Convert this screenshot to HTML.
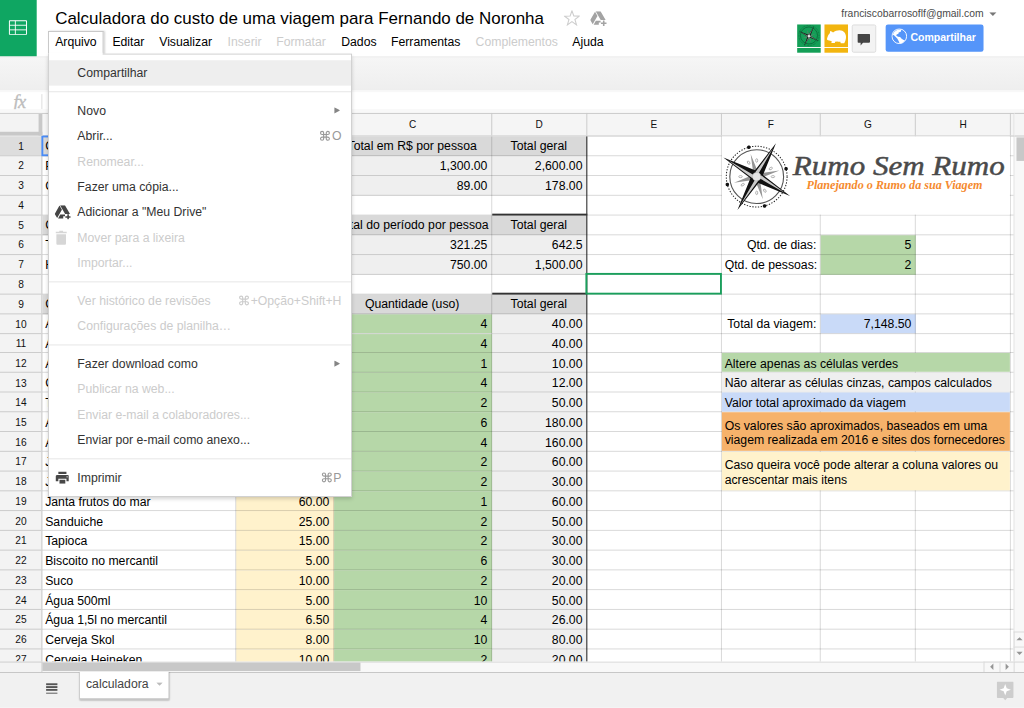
<!DOCTYPE html>
<html><head><meta charset="utf-8"><title>Calculadora</title><style>
*{box-sizing:border-box;margin:0;padding:0}
html,body{width:1024px;height:708px;overflow:hidden;background:#fff}
body{font-family:"Liberation Sans", sans-serif;font-size:13px;color:#000;position:relative}
#app{position:absolute;left:0;top:0;width:1088px;height:752px;transform:scale(0.9411765);transform-origin:0 0;overflow:hidden;background:#fff}
.a{position:absolute}
.t{position:absolute;white-space:nowrap;line-height:21px;height:21px;font-size:13px;color:#000}
.r{text-align:right}
.c{text-align:center}
.hl{position:absolute;height:1px;background:rgba(0,0,0,0.16)}
.vl{position:absolute;width:1px;background:rgba(0,0,0,0.16)}
.mi{position:absolute;left:0;width:100%;height:27px;line-height:27px;font-size:13px;color:#333;padding-left:30px;white-space:nowrap}
.mi.d{color:#ccc}

.mi .k{position:absolute;right:10.1px;top:0;color:#999}
.mi.d .k{color:#ccc}
.sep{position:absolute;left:0;width:100%;height:1px;background:#e5e5e5}
.mb{position:absolute;top:32.94px;height:24.97px;line-height:24.97px;font-size:13px;color:#000;white-space:nowrap;padding-top:0.1px}
.mb.d{color:#ccc}
</style></head><body><div id="app">
<div class="a" style="left:0;top:0;width:39.31px;height:60.03px;background:#0fa662"></div>
<svg class="a" style="left:9.24px;top:20.72px" width="20.19" height="16.57" viewBox="0 0 19 15.600"><rect x="0.900" y="0.900" width="17.200" height="13.900" rx="0.500" fill="none" stroke="#fff" stroke-width="1.050"/><path d="M1 5.500H18M1 10.100H18M6.900 1V14.800" stroke="#fff" stroke-width="0.950" fill="none" opacity="0.950"/></svg>
<div class="a" style="left:58.65px;top:8.5px;font-size:18px;line-height:23.38px;white-space:nowrap;color:#000">Calculadora do custo de uma viagem para Fernando de Noronha</div>
<svg class="a" style="left:598.61px;top:11.05px" width="17.42" height="17.42" viewBox="0 0 16.4 16.4"><path d="M8.20 0.40 L10.03 5.68 L15.62 5.79 L11.17 9.16 L12.78 14.51 L8.20 11.32 L3.62 14.51 L5.23 9.16 L0.78 5.79 L6.37 5.68Z" fill="none" stroke="#cdcdcd" stroke-width="1.05" stroke-linejoin="miter"/></svg>
<svg class="a" style="left:627.3px;top:12.01px" width="17.42" height="15.66" viewBox="0 0 24.700 22.200"><path d="M8.300 0h7.400l7.700 13.300h-7.400z M7.400 0.600l3.700 6.400L3.900 19.600 0.200 13.200z M8.600 14.300h7.200v2.400h-2.700v3.400H5.300z M19.300 13.800h2.400v3h3v2.400h-3v3h-2.400v-3h-3v-2.400h3z" fill="#a3a3a3"/></svg>
<div class="mb" style="left:119.43px">Editar</div>
<div class="mb" style="left:169.15px">Visualizar</div>
<div class="mb d" style="left:241.72px">Inserir</div>
<div class="mb d" style="left:293.46px">Formatar</div>
<div class="mb" style="left:362.52px">Dados</div>
<div class="mb" style="left:415.44px">Ferramentas</div>
<div class="mb d" style="left:505.33px">Complementos</div>
<div class="mb" style="left:608.07px">Ajuda</div>
<div class="a" style="left:893.88px;top:6.91px;font-size:11px;line-height:14.88px;color:#4a4a4a;white-space:nowrap">franciscobarrosoflf@gmail.com</div>
<svg class="a" style="left:1051.45px;top:12.96px" width="7.86" height="4.04" viewBox="0 0 8 4"><path d="M0 0h8L4 4z" fill="#777"/></svg>
<div class="a" style="left:847.13px;top:25.61px;width:25.08px;height:24.33px;background:#149f57"></div>
<div class="a" style="left:847.13px;top:51.0px;width:25.08px;height:4.57px;background:#149f57"></div>
<div class="a" style="left:876.24px;top:25.61px;width:25.08px;height:24.33px;background:#f2b50f"></div>
<div class="a" style="left:876.24px;top:51.0px;width:25.08px;height:4.57px;background:#f2b50f"></div>
<svg class="a" style="left:847.13px;top:25.61px" width="25.08" height="24.33" viewBox="-12 -11.2 24 23.3"><circle r="8.7" fill="none" stroke="#0a5a32" stroke-width="0.7"/><circle r="10.3" fill="none" stroke="#0a5a32" stroke-width="0.6" stroke-dasharray="0.8 0.8"/><g transform="translate(0 0.7) rotate(27)"><path d="M0-7L0.800-0.800 7 0 0.800 0.800 0 7-0.800 0.800-7 0-0.800-0.800z" fill="#5d7f6d" transform="rotate(-45)"/><path d="M0-11.600L1.100-1.100 11.600 0 1.100 1.100 0 11.600-1.100 1.100-11.600 0-1.100-1.100z" fill="#151515"/><path d="M0-10L0 0-1-1zM10 0L0 0 1-1zM0 10L0 0 1 1zM-10 0L0 0-1 1z" fill="#7a8c82"/><circle r="1.300" fill="#e6e6e6"/></g></svg>
<svg class="a" style="left:876.24px;top:25.61px" width="25.08" height="24.33" viewBox="0 0 24 23.3"><path d="M2.500 14.900C3 12 4.500 9.500 5.600 8.600C5.400 7.400 5.800 6.600 6.600 6.800C7.400 7 8 7.600 8.700 8.200C10.500 6.800 13 6 15.300 6C19.500 6 22 9.500 21.900 12.500C21.900 14.500 21.500 16.500 20.700 17.900L20.100 19.200H16.500L16.200 17.600C15 17.800 14 17.700 13 17.400L10.800 17.600 10.500 18.800H7L7.400 17C6.200 16.900 5.300 16.700 4.600 16.400C3.500 16.200 2.400 15.800 2.500 14.900Z" fill="#fff"/></svg>
<div class="a" style="left:905.46px;top:25.92px;width:25.5px;height:29.64px;background:#f3f3f3;border:1px solid #dcdcdc;border-radius:2px"></div>
<svg class="a" style="left:911.2px;top:36.34px" width="13.39" height="12.75" viewBox="0 0 12.6 12"><path d="M1 0h10.6a1 1 0 0 1 1 1v6.8a1 1 0 0 1-1 1H5.6L3.2 11.6V8.8H1a1 1 0 0 1-1-1V1a1 1 0 0 1 1-1z" fill="#444"/></svg>
<div class="a" style="left:941.16px;top:25.82px;width:104.02px;height:29.01px;background:#5595f9;border-radius:2.5px"></div>
<svg class="a" style="left:946.69px;top:30.28px" width="17.0" height="17.0" viewBox="0 0 24 24"><circle cx="12" cy="12" r="11" fill="none" stroke="#fff" stroke-width="1.500" opacity="0.92"/><path d="M2.200 9.500A11 11 0 0 1 15.100 2L14.200 5.100 11.100 6.400 10.700 8.200 8 9.500 7.500 11.300 10.200 12.700 13.300 13.100 15.100 15.300 17.800 17.100 20.500 18.400A11 11 0 0 1 12.400 23L11.500 20.200 10.200 17.600 8.900 15.300 6.700 13.100 4.400 10.900Z" fill="#fff"/></svg>
<div class="a" style="left:967.3px;top:32.09px;font-size:11.2px;font-weight:bold;line-height:16.57px;color:#fff;white-space:nowrap">Compartilhar</div>
<div class="a" style="left:0;top:59.82px;width:1088px;height:36.87px;background:linear-gradient(#f6f6f6,#eeeeee);border-top:1px solid #e7e7e7;border-bottom:1px solid #d9d9d9"></div>
<div class="a" style="left:0;top:96.05px;width:1088px;height:24.23px;background:#fff"></div>
<div class="a" style="left:14.24px;top:98.18px;-webkit-text-stroke:0.35px #bdbdbd;font-family:'Liberation Serif',serif;font-style:italic;font-size:19.5px;line-height:22.31px;color:#bdbdbd;letter-spacing:-0.5px">fx</div>
<div class="a" style="left:43.88px;top:99.88px;width:1px;height:15.94px;background:#dcdcdc"></div>
<div class="a" style="left:0;top:115.71px;width:1088px;height:4.57px;background:#f8f8f8"></div>
<div class="a" style="left:0;top:96.26px;width:1088px;height:1.91px;background:#f8f8f8"></div>
<div id="grid" class="a" style="left:0;top:0;width:1088px;height:702.63px;overflow:hidden">
<div class="a" style="left:0;top:119.74px;width:1088px;height:24.89px;background:#f5f5f5;border-top:1px solid #c8c8c8;border-bottom:1px solid #c6c6c6"></div>
<div class="a" style="left:0;top:144.63px;width:44.8px;height:559.0px;background:#f3f3f3;border-right:1px solid #c6c6c6"></div>
<div class="a" style="left:0;top:144.63px;width:43.8px;height:20px;background:#dddddd"></div>
<div class="a" style="left:44.8px;top:144.63px;width:579.0px;height:20.99px;background:#d9d9d9"></div>
<div class="a" style="left:44.8px;top:228.58px;width:579.0px;height:20.99px;background:#d9d9d9"></div>
<div class="a" style="left:44.8px;top:312.53px;width:579.0px;height:20.99px;background:#d9d9d9"></div>
<div class="a" style="left:354.8px;top:165.62px;width:269.0px;height:20.99px;background:#efefef"></div>
<div class="a" style="left:354.8px;top:186.6px;width:269.0px;height:20.99px;background:#efefef"></div>
<div class="a" style="left:354.8px;top:249.56px;width:269.0px;height:20.99px;background:#efefef"></div>
<div class="a" style="left:354.8px;top:270.55px;width:269.0px;height:20.99px;background:#efefef"></div>
<div class="a" style="left:250.8px;top:333.51px;width:104.0px;height:20.99px;background:#fff2cc"></div>
<div class="a" style="left:354.8px;top:333.51px;width:168.0px;height:20.99px;background:#b6d7a8"></div>
<div class="a" style="left:522.8px;top:333.51px;width:101.0px;height:20.99px;background:#efefef"></div>
<div class="a" style="left:250.8px;top:354.5px;width:104.0px;height:20.99px;background:#fff2cc"></div>
<div class="a" style="left:354.8px;top:354.5px;width:168.0px;height:20.99px;background:#b6d7a8"></div>
<div class="a" style="left:522.8px;top:354.5px;width:101.0px;height:20.99px;background:#efefef"></div>
<div class="a" style="left:250.8px;top:375.49px;width:104.0px;height:20.99px;background:#fff2cc"></div>
<div class="a" style="left:354.8px;top:375.49px;width:168.0px;height:20.99px;background:#b6d7a8"></div>
<div class="a" style="left:522.8px;top:375.49px;width:101.0px;height:20.99px;background:#efefef"></div>
<div class="a" style="left:250.8px;top:396.47px;width:104.0px;height:20.99px;background:#fff2cc"></div>
<div class="a" style="left:354.8px;top:396.47px;width:168.0px;height:20.99px;background:#b6d7a8"></div>
<div class="a" style="left:522.8px;top:396.47px;width:101.0px;height:20.99px;background:#efefef"></div>
<div class="a" style="left:250.8px;top:417.46px;width:104.0px;height:20.99px;background:#fff2cc"></div>
<div class="a" style="left:354.8px;top:417.46px;width:168.0px;height:20.99px;background:#b6d7a8"></div>
<div class="a" style="left:522.8px;top:417.46px;width:101.0px;height:20.99px;background:#efefef"></div>
<div class="a" style="left:250.8px;top:438.45px;width:104.0px;height:20.99px;background:#fff2cc"></div>
<div class="a" style="left:354.8px;top:438.45px;width:168.0px;height:20.99px;background:#b6d7a8"></div>
<div class="a" style="left:522.8px;top:438.45px;width:101.0px;height:20.99px;background:#efefef"></div>
<div class="a" style="left:250.8px;top:459.44px;width:104.0px;height:20.99px;background:#fff2cc"></div>
<div class="a" style="left:354.8px;top:459.44px;width:168.0px;height:20.99px;background:#b6d7a8"></div>
<div class="a" style="left:522.8px;top:459.44px;width:101.0px;height:20.99px;background:#efefef"></div>
<div class="a" style="left:250.8px;top:480.42px;width:104.0px;height:20.99px;background:#fff2cc"></div>
<div class="a" style="left:354.8px;top:480.42px;width:168.0px;height:20.99px;background:#b6d7a8"></div>
<div class="a" style="left:522.8px;top:480.42px;width:101.0px;height:20.99px;background:#efefef"></div>
<div class="a" style="left:250.8px;top:501.41px;width:104.0px;height:20.99px;background:#fff2cc"></div>
<div class="a" style="left:354.8px;top:501.41px;width:168.0px;height:20.99px;background:#b6d7a8"></div>
<div class="a" style="left:522.8px;top:501.41px;width:101.0px;height:20.99px;background:#efefef"></div>
<div class="a" style="left:250.8px;top:522.4px;width:104.0px;height:20.99px;background:#fff2cc"></div>
<div class="a" style="left:354.8px;top:522.4px;width:168.0px;height:20.99px;background:#b6d7a8"></div>
<div class="a" style="left:522.8px;top:522.4px;width:101.0px;height:20.99px;background:#efefef"></div>
<div class="a" style="left:250.8px;top:543.38px;width:104.0px;height:20.99px;background:#fff2cc"></div>
<div class="a" style="left:354.8px;top:543.38px;width:168.0px;height:20.99px;background:#b6d7a8"></div>
<div class="a" style="left:522.8px;top:543.38px;width:101.0px;height:20.99px;background:#efefef"></div>
<div class="a" style="left:250.8px;top:564.37px;width:104.0px;height:20.99px;background:#fff2cc"></div>
<div class="a" style="left:354.8px;top:564.37px;width:168.0px;height:20.99px;background:#b6d7a8"></div>
<div class="a" style="left:522.8px;top:564.37px;width:101.0px;height:20.99px;background:#efefef"></div>
<div class="a" style="left:250.8px;top:585.36px;width:104.0px;height:20.99px;background:#fff2cc"></div>
<div class="a" style="left:354.8px;top:585.36px;width:168.0px;height:20.99px;background:#b6d7a8"></div>
<div class="a" style="left:522.8px;top:585.36px;width:101.0px;height:20.99px;background:#efefef"></div>
<div class="a" style="left:250.8px;top:606.34px;width:104.0px;height:20.99px;background:#fff2cc"></div>
<div class="a" style="left:354.8px;top:606.34px;width:168.0px;height:20.99px;background:#b6d7a8"></div>
<div class="a" style="left:522.8px;top:606.34px;width:101.0px;height:20.99px;background:#efefef"></div>
<div class="a" style="left:250.8px;top:627.33px;width:104.0px;height:20.99px;background:#fff2cc"></div>
<div class="a" style="left:354.8px;top:627.33px;width:168.0px;height:20.99px;background:#b6d7a8"></div>
<div class="a" style="left:522.8px;top:627.33px;width:101.0px;height:20.99px;background:#efefef"></div>
<div class="a" style="left:250.8px;top:648.32px;width:104.0px;height:20.99px;background:#fff2cc"></div>
<div class="a" style="left:354.8px;top:648.32px;width:168.0px;height:20.99px;background:#b6d7a8"></div>
<div class="a" style="left:522.8px;top:648.32px;width:101.0px;height:20.99px;background:#efefef"></div>
<div class="a" style="left:250.8px;top:669.3px;width:104.0px;height:20.99px;background:#fff2cc"></div>
<div class="a" style="left:354.8px;top:669.3px;width:168.0px;height:20.99px;background:#b6d7a8"></div>
<div class="a" style="left:522.8px;top:669.3px;width:101.0px;height:20.99px;background:#efefef"></div>
<div class="a" style="left:250.8px;top:690.29px;width:104.0px;height:20.99px;background:#fff2cc"></div>
<div class="a" style="left:354.8px;top:690.29px;width:168.0px;height:20.99px;background:#b6d7a8"></div>
<div class="a" style="left:522.8px;top:690.29px;width:101.0px;height:20.99px;background:#efefef"></div>
<div class="a" style="left:872.3px;top:249.56px;width:101.0px;height:41.97px;background:#b6d7a8"></div>
<div class="a" style="left:872.3px;top:333.51px;width:101.0px;height:20.99px;background:#c9daf8"></div>
<div class="hl" style="left:0;top:164.62px;width:43.8px;background:#c9c9c9"></div>
<div class="hl" style="left:44.8px;top:164.62px;width:1032.58px"></div>
<div class="hl" style="left:0;top:185.6px;width:43.8px;background:#c9c9c9"></div>
<div class="hl" style="left:44.8px;top:185.6px;width:1032.58px"></div>
<div class="hl" style="left:0;top:206.59px;width:43.8px;background:#c9c9c9"></div>
<div class="hl" style="left:44.8px;top:206.59px;width:1032.58px"></div>
<div class="hl" style="left:0;top:227.58px;width:43.8px;background:#c9c9c9"></div>
<div class="hl" style="left:44.8px;top:227.58px;width:1032.58px"></div>
<div class="hl" style="left:0;top:248.56px;width:43.8px;background:#c9c9c9"></div>
<div class="hl" style="left:44.8px;top:248.56px;width:1032.58px"></div>
<div class="hl" style="left:0;top:269.55px;width:43.8px;background:#c9c9c9"></div>
<div class="hl" style="left:44.8px;top:269.55px;width:1032.58px"></div>
<div class="hl" style="left:0;top:290.54px;width:43.8px;background:#c9c9c9"></div>
<div class="hl" style="left:44.8px;top:290.54px;width:1032.58px"></div>
<div class="hl" style="left:0;top:311.53px;width:43.8px;background:#c9c9c9"></div>
<div class="hl" style="left:44.8px;top:311.53px;width:1032.58px"></div>
<div class="hl" style="left:0;top:332.51px;width:43.8px;background:#c9c9c9"></div>
<div class="hl" style="left:44.8px;top:332.51px;width:1032.58px"></div>
<div class="hl" style="left:0;top:353.5px;width:43.8px;background:#c9c9c9"></div>
<div class="hl" style="left:44.8px;top:353.5px;width:1032.58px"></div>
<div class="hl" style="left:0;top:374.49px;width:43.8px;background:#c9c9c9"></div>
<div class="hl" style="left:44.8px;top:374.49px;width:1032.58px"></div>
<div class="hl" style="left:0;top:395.47px;width:43.8px;background:#c9c9c9"></div>
<div class="hl" style="left:44.8px;top:395.47px;width:1032.58px"></div>
<div class="hl" style="left:0;top:416.46px;width:43.8px;background:#c9c9c9"></div>
<div class="hl" style="left:44.8px;top:416.46px;width:1032.58px"></div>
<div class="hl" style="left:0;top:437.45px;width:43.8px;background:#c9c9c9"></div>
<div class="hl" style="left:44.8px;top:437.45px;width:1032.58px"></div>
<div class="hl" style="left:0;top:458.43px;width:43.8px;background:#c9c9c9"></div>
<div class="hl" style="left:44.8px;top:458.43px;width:1032.58px"></div>
<div class="hl" style="left:0;top:479.42px;width:43.8px;background:#c9c9c9"></div>
<div class="hl" style="left:44.8px;top:479.42px;width:1032.58px"></div>
<div class="hl" style="left:0;top:500.41px;width:43.8px;background:#c9c9c9"></div>
<div class="hl" style="left:44.8px;top:500.41px;width:1032.58px"></div>
<div class="hl" style="left:0;top:521.4px;width:43.8px;background:#c9c9c9"></div>
<div class="hl" style="left:44.8px;top:521.4px;width:1032.58px"></div>
<div class="hl" style="left:0;top:542.38px;width:43.8px;background:#c9c9c9"></div>
<div class="hl" style="left:44.8px;top:542.38px;width:1032.58px"></div>
<div class="hl" style="left:0;top:563.37px;width:43.8px;background:#c9c9c9"></div>
<div class="hl" style="left:44.8px;top:563.37px;width:1032.58px"></div>
<div class="hl" style="left:0;top:584.36px;width:43.8px;background:#c9c9c9"></div>
<div class="hl" style="left:44.8px;top:584.36px;width:1032.58px"></div>
<div class="hl" style="left:0;top:605.34px;width:43.8px;background:#c9c9c9"></div>
<div class="hl" style="left:44.8px;top:605.34px;width:1032.58px"></div>
<div class="hl" style="left:0;top:626.33px;width:43.8px;background:#c9c9c9"></div>
<div class="hl" style="left:44.8px;top:626.33px;width:1032.58px"></div>
<div class="hl" style="left:0;top:647.32px;width:43.8px;background:#c9c9c9"></div>
<div class="hl" style="left:44.8px;top:647.32px;width:1032.58px"></div>
<div class="hl" style="left:0;top:668.3px;width:43.8px;background:#c9c9c9"></div>
<div class="hl" style="left:44.8px;top:668.3px;width:1032.58px"></div>
<div class="hl" style="left:0;top:689.29px;width:43.8px;background:#c9c9c9"></div>
<div class="hl" style="left:44.8px;top:689.29px;width:1032.58px"></div>
<div class="hl" style="left:0;top:710.28px;width:43.8px;background:#c9c9c9"></div>
<div class="hl" style="left:44.8px;top:710.28px;width:1032.58px"></div>
<div class="vl" style="left:249.8px;top:144.63px;height:559.0px"></div>
<div class="vl" style="left:249.8px;top:120.28px;height:23.35px;background:#c9c9c9"></div>
<div class="vl" style="left:353.8px;top:144.63px;height:559.0px"></div>
<div class="vl" style="left:353.8px;top:120.28px;height:23.35px;background:#c9c9c9"></div>
<div class="vl" style="left:521.8px;top:144.63px;height:559.0px"></div>
<div class="vl" style="left:521.8px;top:120.28px;height:23.35px;background:#c9c9c9"></div>
<div class="vl" style="left:622.8px;top:144.63px;height:559.0px"></div>
<div class="vl" style="left:622.8px;top:120.28px;height:23.35px;background:#c9c9c9"></div>
<div class="vl" style="left:765.8px;top:144.63px;height:559.0px"></div>
<div class="vl" style="left:765.8px;top:120.28px;height:23.35px;background:#c9c9c9"></div>
<div class="vl" style="left:871.3px;top:144.63px;height:559.0px"></div>
<div class="vl" style="left:871.3px;top:120.28px;height:23.35px;background:#c9c9c9"></div>
<div class="vl" style="left:972.3px;top:144.63px;height:559.0px"></div>
<div class="vl" style="left:972.3px;top:120.28px;height:23.35px;background:#c9c9c9"></div>
<div class="vl" style="left:1073.3px;top:144.63px;height:559.0px"></div>
<div class="vl" style="left:1073.3px;top:120.28px;height:23.35px;background:#c9c9c9"></div>
<div class="a" style="left:766.8px;top:375.487px;width:306.5px;height:19.99px;background:#b6d7a8"></div>
<div class="a" style="left:766.8px;top:396.474px;width:306.5px;height:19.99px;background:#efefef"></div>
<div class="a" style="left:766.8px;top:417.461px;width:306.5px;height:19.99px;background:#c9daf8"></div>
<div class="a" style="left:766.8px;top:438.448px;width:306.5px;height:40.97px;background:#f6b26b"></div>
<div class="a" style="left:766.8px;top:480.422px;width:306.5px;height:40.97px;background:#fff2cc"></div>
<div class="a" style="left:766.8px;top:144.63px;width:306.5px;height:82.95px;background:#fff"></div>
<div class="t c" style="left:44.8px;top:120.91px;width:205.0px;height:23.16px;line-height:23.16px;font-size:10.7px;color:#111">A</div>
<div class="t c" style="left:250.8px;top:120.91px;width:103.0px;height:23.16px;line-height:23.16px;font-size:10.7px;color:#111">B</div>
<div class="t c" style="left:354.8px;top:120.91px;width:167.0px;height:23.16px;line-height:23.16px;font-size:10.7px;color:#111">C</div>
<div class="t c" style="left:522.8px;top:120.91px;width:100.0px;height:23.16px;line-height:23.16px;font-size:10.7px;color:#111">D</div>
<div class="t c" style="left:623.8px;top:120.91px;width:142.0px;height:23.16px;line-height:23.16px;font-size:10.7px;color:#111">E</div>
<div class="t c" style="left:766.8px;top:120.91px;width:104.5px;height:23.16px;line-height:23.16px;font-size:10.7px;color:#111">F</div>
<div class="t c" style="left:872.3px;top:120.91px;width:100.0px;height:23.16px;line-height:23.16px;font-size:10.7px;color:#111">G</div>
<div class="t c" style="left:973.3px;top:120.91px;width:100.0px;height:23.16px;line-height:23.16px;font-size:10.7px;color:#111">H</div>
<div class="t c" style="left:0;top:144.48px;width:44.599999999999994px;font-size:10.8px;color:#111;padding-top:0.2px">1</div>
<div class="t c" style="left:0;top:165.917px;width:44.599999999999994px;font-size:10.8px;color:#111;padding-top:0.2px">2</div>
<div class="t c" style="left:0;top:186.904px;width:44.599999999999994px;font-size:10.8px;color:#111;padding-top:0.2px">3</div>
<div class="t c" style="left:0;top:207.441px;width:44.599999999999994px;font-size:10.8px;color:#111;padding-top:0.2px">4</div>
<div class="t c" style="left:0;top:228.428px;width:44.599999999999994px;font-size:10.8px;color:#111;padding-top:0.2px">5</div>
<div class="t c" style="left:0;top:249.865px;width:44.599999999999994px;font-size:10.8px;color:#111;padding-top:0.2px">6</div>
<div class="t c" style="left:0;top:270.852px;width:44.599999999999994px;font-size:10.8px;color:#111;padding-top:0.2px">7</div>
<div class="t c" style="left:0;top:291.389px;width:44.599999999999994px;font-size:10.8px;color:#111;padding-top:0.2px">8</div>
<div class="t c" style="left:0;top:312.376px;width:44.599999999999994px;font-size:10.8px;color:#111;padding-top:0.2px">9</div>
<div class="t c" style="left:0;top:333.363px;width:44.599999999999994px;font-size:10.8px;color:#111;padding-top:0.2px">10</div>
<div class="t c" style="left:0;top:354.8px;width:44.599999999999994px;font-size:10.8px;color:#111;padding-top:0.2px">11</div>
<div class="t c" style="left:0;top:375.787px;width:44.599999999999994px;font-size:10.8px;color:#111;padding-top:0.2px">12</div>
<div class="t c" style="left:0;top:396.324px;width:44.599999999999994px;font-size:10.8px;color:#111;padding-top:0.2px">13</div>
<div class="t c" style="left:0;top:417.311px;width:44.599999999999994px;font-size:10.8px;color:#111;padding-top:0.2px">14</div>
<div class="t c" style="left:0;top:438.748px;width:44.599999999999994px;font-size:10.8px;color:#111;padding-top:0.2px">15</div>
<div class="t c" style="left:0;top:459.735px;width:44.599999999999994px;font-size:10.8px;color:#111;padding-top:0.2px">16</div>
<div class="t c" style="left:0;top:480.272px;width:44.599999999999994px;font-size:10.8px;color:#111;padding-top:0.2px">17</div>
<div class="t c" style="left:0;top:501.259px;width:44.599999999999994px;font-size:10.8px;color:#111;padding-top:0.2px">18</div>
<div class="t c" style="left:0;top:522.696px;width:44.599999999999994px;font-size:10.8px;color:#111;padding-top:0.2px">19</div>
<div class="t c" style="left:0;top:543.683px;width:44.599999999999994px;font-size:10.8px;color:#111;padding-top:0.2px">20</div>
<div class="t c" style="left:0;top:564.22px;width:44.599999999999994px;font-size:10.8px;color:#111;padding-top:0.2px">21</div>
<div class="t c" style="left:0;top:585.207px;width:44.599999999999994px;font-size:10.8px;color:#111;padding-top:0.2px">22</div>
<div class="t c" style="left:0;top:606.644px;width:44.599999999999994px;font-size:10.8px;color:#111;padding-top:0.2px">23</div>
<div class="t c" style="left:0;top:627.631px;width:44.599999999999994px;font-size:10.8px;color:#111;padding-top:0.2px">24</div>
<div class="t c" style="left:0;top:648.168px;width:44.599999999999994px;font-size:10.8px;color:#111;padding-top:0.2px">25</div>
<div class="t c" style="left:0;top:669.155px;width:44.599999999999994px;font-size:10.8px;color:#111;padding-top:0.2px">26</div>
<div class="t c" style="left:0;top:690.142px;width:44.599999999999994px;font-size:10.8px;color:#111;padding-top:0.2px">27</div>
<div class="t" style="left:44.8px;top:144.48px;width:205.0px;padding-left:3.2px;padding-right:3.95px;overflow:hidden;">Custos fixos</div>
<div class="t" style="left:44.8px;top:165.917px;width:205.0px;padding-left:3.2px;padding-right:3.95px;overflow:hidden;">Passagem aérea</div>
<div class="t" style="left:44.8px;top:186.904px;width:205.0px;padding-left:3.2px;padding-right:3.95px;overflow:hidden;">Carro</div>
<div class="t" style="left:44.8px;top:228.428px;width:205.0px;padding-left:3.2px;padding-right:3.95px;overflow:hidden;">Custos por período</div>
<div class="t" style="left:44.8px;top:249.865px;width:205.0px;padding-left:3.2px;padding-right:3.95px;overflow:hidden;">Taxa de preservação</div>
<div class="t" style="left:44.8px;top:270.852px;width:205.0px;padding-left:3.2px;padding-right:3.95px;overflow:hidden;">Hospedagem</div>
<div class="t" style="left:44.8px;top:312.376px;width:205.0px;padding-left:3.2px;padding-right:3.95px;overflow:hidden;">Custos variáveis</div>
<div class="t" style="left:44.8px;top:333.363px;width:205.0px;padding-left:3.2px;padding-right:3.95px;overflow:hidden;">Almoço</div>
<div class="t" style="left:44.8px;top:354.8px;width:205.0px;padding-left:3.2px;padding-right:3.95px;overflow:hidden;">Almoço 2</div>
<div class="t" style="left:44.8px;top:375.787px;width:205.0px;padding-left:3.2px;padding-right:3.95px;overflow:hidden;">Açaí</div>
<div class="t" style="left:44.8px;top:396.324px;width:205.0px;padding-left:3.2px;padding-right:3.95px;overflow:hidden;">Café</div>
<div class="t" style="left:44.8px;top:417.311px;width:205.0px;padding-left:3.2px;padding-right:3.95px;overflow:hidden;">Tapioca</div>
<div class="t" style="left:44.8px;top:438.748px;width:205.0px;padding-left:3.2px;padding-right:3.95px;overflow:hidden;">Almoço 3</div>
<div class="t" style="left:44.8px;top:459.735px;width:205.0px;padding-left:3.2px;padding-right:3.95px;overflow:hidden;">Almoço 4</div>
<div class="t" style="left:44.8px;top:480.272px;width:205.0px;padding-left:3.2px;padding-right:3.95px;overflow:hidden;">Janta</div>
<div class="t" style="left:44.8px;top:501.259px;width:205.0px;padding-left:3.2px;padding-right:3.95px;overflow:hidden;">Janta 2</div>
<div class="t" style="left:44.8px;top:522.696px;width:205.0px;padding-left:3.2px;padding-right:3.95px;overflow:hidden;">Janta frutos do mar</div>
<div class="t" style="left:44.8px;top:543.683px;width:205.0px;padding-left:3.2px;padding-right:3.95px;overflow:hidden;">Sanduiche</div>
<div class="t" style="left:44.8px;top:564.22px;width:205.0px;padding-left:3.2px;padding-right:3.95px;overflow:hidden;">Tapioca</div>
<div class="t" style="left:44.8px;top:585.207px;width:205.0px;padding-left:3.2px;padding-right:3.95px;overflow:hidden;">Biscoito no mercantil</div>
<div class="t" style="left:44.8px;top:606.644px;width:205.0px;padding-left:3.2px;padding-right:3.95px;overflow:hidden;">Suco</div>
<div class="t" style="left:44.8px;top:627.631px;width:205.0px;padding-left:3.2px;padding-right:3.95px;overflow:hidden;">Água 500ml</div>
<div class="t" style="left:44.8px;top:648.168px;width:205.0px;padding-left:3.2px;padding-right:3.95px;overflow:hidden;">Água 1,5l no mercantil</div>
<div class="t" style="left:44.8px;top:669.155px;width:205.0px;padding-left:3.2px;padding-right:3.95px;overflow:hidden;">Cerveja Skol</div>
<div class="t" style="left:44.8px;top:690.142px;width:205.0px;padding-left:3.2px;padding-right:3.95px;overflow:hidden;">Cerveja Heineken</div>
<div class="t r" style="left:250.8px;top:522.696px;width:103.0px;padding-left:3.2px;padding-right:3.95px;overflow:hidden;">60.00</div>
<div class="t r" style="left:250.8px;top:543.683px;width:103.0px;padding-left:3.2px;padding-right:3.95px;overflow:hidden;">25.00</div>
<div class="t r" style="left:250.8px;top:564.22px;width:103.0px;padding-left:3.2px;padding-right:3.95px;overflow:hidden;">15.00</div>
<div class="t r" style="left:250.8px;top:585.207px;width:103.0px;padding-left:3.2px;padding-right:3.95px;overflow:hidden;">5.00</div>
<div class="t r" style="left:250.8px;top:606.644px;width:103.0px;padding-left:3.2px;padding-right:3.95px;overflow:hidden;">10.00</div>
<div class="t r" style="left:250.8px;top:627.631px;width:103.0px;padding-left:3.2px;padding-right:3.95px;overflow:hidden;">5.00</div>
<div class="t r" style="left:250.8px;top:648.168px;width:103.0px;padding-left:3.2px;padding-right:3.95px;overflow:hidden;">6.50</div>
<div class="t r" style="left:250.8px;top:669.155px;width:103.0px;padding-left:3.2px;padding-right:3.95px;overflow:hidden;">8.00</div>
<div class="t r" style="left:250.8px;top:690.142px;width:103.0px;padding-left:3.2px;padding-right:3.95px;overflow:hidden;">10.00</div>
<div class="t r" style="left:354.8px;top:165.917px;width:167.0px;padding-left:3.2px;padding-right:3.95px;overflow:hidden;">1,300.00</div>
<div class="t r" style="left:354.8px;top:186.904px;width:167.0px;padding-left:3.2px;padding-right:3.95px;overflow:hidden;">89.00</div>
<div class="t r" style="left:354.8px;top:249.865px;width:167.0px;padding-left:3.2px;padding-right:3.95px;overflow:hidden;">321.25</div>
<div class="t r" style="left:354.8px;top:270.852px;width:167.0px;padding-left:3.2px;padding-right:3.95px;overflow:hidden;">750.00</div>
<div class="t r" style="left:354.8px;top:333.363px;width:167.0px;padding-left:3.2px;padding-right:3.95px;overflow:hidden;">4</div>
<div class="t r" style="left:354.8px;top:354.8px;width:167.0px;padding-left:3.2px;padding-right:3.95px;overflow:hidden;">4</div>
<div class="t r" style="left:354.8px;top:375.787px;width:167.0px;padding-left:3.2px;padding-right:3.95px;overflow:hidden;">1</div>
<div class="t r" style="left:354.8px;top:396.324px;width:167.0px;padding-left:3.2px;padding-right:3.95px;overflow:hidden;">4</div>
<div class="t r" style="left:354.8px;top:417.311px;width:167.0px;padding-left:3.2px;padding-right:3.95px;overflow:hidden;">2</div>
<div class="t r" style="left:354.8px;top:438.748px;width:167.0px;padding-left:3.2px;padding-right:3.95px;overflow:hidden;">6</div>
<div class="t r" style="left:354.8px;top:459.735px;width:167.0px;padding-left:3.2px;padding-right:3.95px;overflow:hidden;">4</div>
<div class="t r" style="left:354.8px;top:480.272px;width:167.0px;padding-left:3.2px;padding-right:3.95px;overflow:hidden;">2</div>
<div class="t r" style="left:354.8px;top:501.259px;width:167.0px;padding-left:3.2px;padding-right:3.95px;overflow:hidden;">2</div>
<div class="t r" style="left:354.8px;top:522.696px;width:167.0px;padding-left:3.2px;padding-right:3.95px;overflow:hidden;">1</div>
<div class="t r" style="left:354.8px;top:543.683px;width:167.0px;padding-left:3.2px;padding-right:3.95px;overflow:hidden;">2</div>
<div class="t r" style="left:354.8px;top:564.22px;width:167.0px;padding-left:3.2px;padding-right:3.95px;overflow:hidden;">2</div>
<div class="t r" style="left:354.8px;top:585.207px;width:167.0px;padding-left:3.2px;padding-right:3.95px;overflow:hidden;">6</div>
<div class="t r" style="left:354.8px;top:606.644px;width:167.0px;padding-left:3.2px;padding-right:3.95px;overflow:hidden;">2</div>
<div class="t r" style="left:354.8px;top:627.631px;width:167.0px;padding-left:3.2px;padding-right:3.95px;overflow:hidden;">10</div>
<div class="t r" style="left:354.8px;top:648.168px;width:167.0px;padding-left:3.2px;padding-right:3.95px;overflow:hidden;">4</div>
<div class="t r" style="left:354.8px;top:669.155px;width:167.0px;padding-left:3.2px;padding-right:3.95px;overflow:hidden;">10</div>
<div class="t r" style="left:354.8px;top:690.142px;width:167.0px;padding-left:3.2px;padding-right:3.95px;overflow:hidden;">2</div>
<div class="t c" style="left:354.8px;top:144.48px;width:167.0px;padding-left:3.2px;padding-right:3.95px;overflow:hidden;">Total em R$ por pessoa</div>
<div class="t c" style="left:354.8px;top:228.428px;width:167.0px;padding-left:3.2px;padding-right:3.95px;overflow:hidden;">Total do período por pessoa</div>
<div class="t c" style="left:354.8px;top:312.376px;width:167.0px;padding-left:3.2px;padding-right:3.95px;overflow:hidden;">Quantidade (uso)</div>
<div class="t r" style="left:522.8px;top:165.917px;width:100.0px;padding-left:3.2px;padding-right:3.95px;overflow:hidden;">2,600.00</div>
<div class="t r" style="left:522.8px;top:186.904px;width:100.0px;padding-left:3.2px;padding-right:3.95px;overflow:hidden;">178.00</div>
<div class="t r" style="left:522.8px;top:249.865px;width:100.0px;padding-left:3.2px;padding-right:3.95px;overflow:hidden;">642.5</div>
<div class="t r" style="left:522.8px;top:270.852px;width:100.0px;padding-left:3.2px;padding-right:3.95px;overflow:hidden;">1,500.00</div>
<div class="t r" style="left:522.8px;top:333.363px;width:100.0px;padding-left:3.2px;padding-right:3.95px;overflow:hidden;">40.00</div>
<div class="t r" style="left:522.8px;top:354.8px;width:100.0px;padding-left:3.2px;padding-right:3.95px;overflow:hidden;">40.00</div>
<div class="t r" style="left:522.8px;top:375.787px;width:100.0px;padding-left:3.2px;padding-right:3.95px;overflow:hidden;">10.00</div>
<div class="t r" style="left:522.8px;top:396.324px;width:100.0px;padding-left:3.2px;padding-right:3.95px;overflow:hidden;">12.00</div>
<div class="t r" style="left:522.8px;top:417.311px;width:100.0px;padding-left:3.2px;padding-right:3.95px;overflow:hidden;">50.00</div>
<div class="t r" style="left:522.8px;top:438.748px;width:100.0px;padding-left:3.2px;padding-right:3.95px;overflow:hidden;">180.00</div>
<div class="t r" style="left:522.8px;top:459.735px;width:100.0px;padding-left:3.2px;padding-right:3.95px;overflow:hidden;">160.00</div>
<div class="t r" style="left:522.8px;top:480.272px;width:100.0px;padding-left:3.2px;padding-right:3.95px;overflow:hidden;">60.00</div>
<div class="t r" style="left:522.8px;top:501.259px;width:100.0px;padding-left:3.2px;padding-right:3.95px;overflow:hidden;">30.00</div>
<div class="t r" style="left:522.8px;top:522.696px;width:100.0px;padding-left:3.2px;padding-right:3.95px;overflow:hidden;">60.00</div>
<div class="t r" style="left:522.8px;top:543.683px;width:100.0px;padding-left:3.2px;padding-right:3.95px;overflow:hidden;">50.00</div>
<div class="t r" style="left:522.8px;top:564.22px;width:100.0px;padding-left:3.2px;padding-right:3.95px;overflow:hidden;">30.00</div>
<div class="t r" style="left:522.8px;top:585.207px;width:100.0px;padding-left:3.2px;padding-right:3.95px;overflow:hidden;">30.00</div>
<div class="t r" style="left:522.8px;top:606.644px;width:100.0px;padding-left:3.2px;padding-right:3.95px;overflow:hidden;">20.00</div>
<div class="t r" style="left:522.8px;top:627.631px;width:100.0px;padding-left:3.2px;padding-right:3.95px;overflow:hidden;">50.00</div>
<div class="t r" style="left:522.8px;top:648.168px;width:100.0px;padding-left:3.2px;padding-right:3.95px;overflow:hidden;">26.00</div>
<div class="t r" style="left:522.8px;top:669.155px;width:100.0px;padding-left:3.2px;padding-right:3.95px;overflow:hidden;">80.00</div>
<div class="t r" style="left:522.8px;top:690.142px;width:100.0px;padding-left:3.2px;padding-right:3.95px;overflow:hidden;">20.00</div>
<div class="t c" style="left:522.8px;top:144.48px;width:100.0px;padding-left:3.2px;padding-right:3.95px;overflow:hidden;">Total geral</div>
<div class="t c" style="left:522.8px;top:228.428px;width:100.0px;padding-left:3.2px;padding-right:3.95px;overflow:hidden;">Total geral</div>
<div class="t c" style="left:522.8px;top:312.376px;width:100.0px;padding-left:3.2px;padding-right:3.95px;overflow:hidden;">Total geral</div>
<div class="t r" style="left:766.8px;top:249.865px;width:104.5px;padding-left:3.2px;padding-right:3.95px;overflow:hidden;">Qtd. de dias:</div>
<div class="t r" style="left:766.8px;top:270.852px;width:104.5px;padding-left:3.2px;padding-right:3.95px;overflow:hidden;">Qtd. de pessoas:</div>
<div class="t r" style="left:766.8px;top:333.363px;width:104.5px;padding-left:3.2px;padding-right:3.95px;overflow:hidden;">Total da viagem:</div>
<div class="t r" style="left:872.3px;top:249.865px;width:100.0px;padding-left:3.2px;padding-right:3.95px;overflow:hidden;">5</div>
<div class="t r" style="left:872.3px;top:270.852px;width:100.0px;padding-left:3.2px;padding-right:3.95px;overflow:hidden;">2</div>
<div class="t r" style="left:872.3px;top:333.363px;width:100.0px;padding-left:3.2px;padding-right:3.95px;overflow:hidden;">7,148.50</div>
<div class="t" style="left:766.8px;top:375.787px;width:306.5px;padding-left:3.2px;padding-right:3.95px;overflow:hidden;">Altere apenas as células verdes</div>
<div class="t" style="left:766.8px;top:396.324px;width:306.5px;padding-left:3.2px;padding-right:3.95px;overflow:hidden;">Não alterar as células cinzas, campos calculados</div>
<div class="t" style="left:766.8px;top:417.311px;width:306.5px;padding-left:3.2px;padding-right:3.95px;overflow:hidden;">Valor total aproximado da viagem</div>
<div class="a" style="left:766.8px;top:444.65px;padding-left:3.2px;font-size:13px;line-height:15.4px;white-space:nowrap;color:#000">Os valores são aproximados, baseados em uma<br>viagem realizada em 2016 e sites dos fornecedores</div>
<div class="a" style="left:766.8px;top:486.32px;padding-left:3.2px;font-size:13px;line-height:15.4px;white-space:nowrap;color:#000">Caso queira você pode alterar a coluna valores ou<br>acrescentar mais itens</div>
<div class="a" style="left:622.5999999999999px;top:144.63px;width:1.5px;height:559.0px;background:#222"></div>
<div class="a" style="left:522.8px;top:227.38px;width:101.0px;height:1.4px;background:#333"></div>
<div class="a" style="left:522.8px;top:311.33px;width:101.0px;height:1.4px;background:#333"></div>
<div class="a" style="left:44.3px;top:143.63px;width:206.5px;height:22px;border:2px solid #4a8cf7"></div>
<div class="a" style="left:622.4px;top:290.14px;width:144.9px;height:22.8px;border:2px solid #1a9f5c"></div>
<svg class="a" style="left:766.8px;top:144.63px" width="306.5" height="82.95" viewBox="766.8 144.63 306.5 82.95">
<g transform="translate(803.78 187.32)">
<circle r="32.30" fill="none" stroke="#222" stroke-width="1.1" stroke-dasharray="1.4 1.6"/>
<circle r="28.58" fill="none" stroke="#555" stroke-width="1.2"/>
<g transform="rotate(-15)">
<path d="M0 -24.97L2.76 -2.76 24.97 0 2.76 2.76 0 24.97 -2.76 2.76 -24.97 0 -2.76 -2.76z" fill="#959595"/>
<circle cx="0" cy="-32.30" r="1.9" fill="#111"/><circle cy="0" cx="32.30" r="1.9" fill="#111"/><circle cx="0" cy="32.30" r="1.9" fill="#111"/><circle cy="0" cx="-32.30" r="1.9" fill="#111"/>
</g>
<ellipse cx="0" cy="-17.21" rx="1.1" ry="1.9" fill="none" stroke="#9c9c9c" stroke-width="0.8" transform="rotate(0)"/><ellipse cx="0" cy="-17.21" rx="1.1" ry="1.9" fill="none" stroke="#9c9c9c" stroke-width="0.8" transform="rotate(60)"/><ellipse cx="0" cy="-17.21" rx="1.1" ry="1.9" fill="none" stroke="#9c9c9c" stroke-width="0.8" transform="rotate(90)"/><ellipse cx="0" cy="-17.21" rx="1.1" ry="1.9" fill="none" stroke="#9c9c9c" stroke-width="0.8" transform="rotate(150)"/><ellipse cx="0" cy="-17.21" rx="1.1" ry="1.9" fill="none" stroke="#9c9c9c" stroke-width="0.8" transform="rotate(180)"/><ellipse cx="0" cy="-17.21" rx="1.1" ry="1.9" fill="none" stroke="#9c9c9c" stroke-width="0.8" transform="rotate(240)"/><ellipse cx="0" cy="-17.21" rx="1.1" ry="1.9" fill="none" stroke="#9c9c9c" stroke-width="0.8" transform="rotate(270)"/><ellipse cx="0" cy="-17.21" rx="1.1" ry="1.9" fill="none" stroke="#9c9c9c" stroke-width="0.8" transform="rotate(330)"/>
<g transform="rotate(30)">
<path d="M0 -40.91L4.89 -4.89 40.91 0 4.89 4.89 0 40.91 -4.89 4.89 -40.91 0 -4.89 -4.89z" fill="#111"/>
<path d="M0 -35.06L0 0 -3.61 -3.61z M35.06 0L0 0 3.61 -3.61z M0 35.06L0 0 3.61 3.61z M-35.06 0L0 0 -3.61 3.61z" fill="#c9c9c9"/>
</g>
<circle r="4.36" fill="#e4e4e4" stroke="#bbb" stroke-width="0.5"/>
</g>
<text x="842.14" y="185.3" font-family="Liberation Serif, serif" font-style="italic" font-size="28.69" fill="#4a4a4a" stroke="#4a4a4a" stroke-width="0.5" textLength="225.25" lengthAdjust="spacingAndGlyphs">Rumo Sem Rumo</text>
<text x="856.69" y="200.81" font-family="Liberation Serif, serif" font-style="italic" font-weight="bold" font-size="12.75" fill="#f58a2e" textLength="187.0" lengthAdjust="spacingAndGlyphs">Planejando o Rumo da sua Viagem</text>
</svg>
<div class="a" style="left:0;top:120.59px;width:44.62px;height:23.34px;background:#f3f3f3;border-right:4.04px solid #c8c8c8;border-bottom:4.25px solid #c8c8c8"></div>
<div class="a" style="left:1077.16px;top:120.28px;width:1px;height:582.35px;background:#d6d6d6"></div>
<div class="a" style="left:1078.16px;top:120.28px;width:11.16px;height:582.35px;background:#f8f8f8"></div>
<div class="a" style="left:1078.16px;top:119.74px;width:11.16px;height:24.89px;background:#f5f5f5;border-top:1px solid #c8c8c8;border-bottom:1px solid #c6c6c6"></div>
<div class="a" style="left:1079.5px;top:145.88px;width:8.71px;height:25.29px;background:#c8c8c8"></div>
<div class="a" style="left:1077.16px;top:671.08px;width:11.16px;height:15.73px;background:#f8f8f8;border-top:1px solid #d9d9d9;border-left:1px solid #d9d9d9"></div>
<svg class="a" style="left:1078.86px;top:675.96px" width="8.5" height="5.95" viewBox="0 0 9 6"><path d="M1 4.5L4.5 1 8 4.5z" fill="#959595"/></svg>
<div class="a" style="left:1077.16px;top:686.59px;width:11.16px;height:15.73px;background:#f8f8f8;border-top:1px solid #d9d9d9;border-left:1px solid #d9d9d9"></div>
<svg class="a" style="left:1078.86px;top:691.48px" width="8.5" height="5.95" viewBox="0 0 9 6"><path d="M1 1.5L4.5 5 8 1.5z" fill="#959595"/></svg>
</div>
<div class="a" style="left:0;top:702.63px;width:1088px;height:11.37px;background:#f8f8f8;border-top:1px solid #d9d9d9"></div>
<div class="a" style="left:0;top:702.63px;width:44.8px;height:11.37px;background:#f3f3f3;border-top:1px solid #d0d0d0;border-right:1px solid #d0d0d0"></div>
<div class="a" style="left:44.8px;top:704.01px;width:337.88px;height:9.14px;background:#c8c8c8"></div>
<div class="a" style="left:1045.08px;top:702.63px;width:16.57px;height:11.37px;border-left:1px solid #d9d9d9;border-top:1px solid #d9d9d9;background:#f8f8f8"></div>
<svg class="a" style="left:1050.6px;top:703.8px" width="5.95" height="8.93" viewBox="0 0 6 9"><path d="M4.5 1L1 4.5 4.5 8z" fill="#959595"/></svg>
<div class="a" style="left:1061.65px;top:702.63px;width:16.57px;height:11.37px;border-left:1px solid #d9d9d9;border-top:1px solid #d9d9d9;background:#f8f8f8"></div>
<svg class="a" style="left:1067.18px;top:703.8px" width="5.95" height="8.93" viewBox="0 0 6 9"><path d="M1.500 1L5 4.5 1.500 8z" fill="#959595"/></svg>
<div class="a" style="left:1077.16px;top:702.63px;width:11.69px;height:11.37px;border-left:1px solid #d9d9d9;border-top:1px solid #d9d9d9;background:#f8f8f8"></div>
<div class="a" style="left:0;top:713.58px;width:1088px;height:39.31px;background:#f1f1f1;border-top:1px solid #c4c4c4"></div>
<div class="a" style="left:48.77px;top:726.43px;width:12.43px;height:1.97px;background:#555"></div>
<div class="a" style="left:48.77px;top:729.46px;width:12.43px;height:1.97px;background:#555"></div>
<div class="a" style="left:48.77px;top:732.49px;width:12.43px;height:1.97px;background:#555"></div>
<div class="a" style="left:48.77px;top:735.52px;width:12.43px;height:1.97px;background:#555"></div>
<div class="a" style="left:83.83px;top:713.58px;width:96.37px;height:29.43px;background:#fff;border:1px solid #c9c9c9;border-top:none;border-radius:0 0 2px 2px;box-shadow:0 1px 1.5px rgba(0,0,0,0.18)"></div>
<div class="a" style="left:91.38px;top:718.25px;font-size:13px;line-height:18.06px;color:#444;white-space:nowrap">calculadora</div>
<svg class="a" style="left:165.75px;top:725.47px" width="7.01" height="3.83" viewBox="0 0 8 4"><path d="M0 0h8L4 4z" fill="#bcbcbc"/></svg>
<svg class="a" style="left:1059.31px;top:724.41px" width="18.06" height="20.19" viewBox="0 0 17 19"><path d="M1.2 0h14.600a1.2 1.2 0 0 1 1.2 1.2v14.200a1.2 1.2 0 0 1-1.2 1.2H10.500L8.500 18.800 6.500 16.600H1.2A1.2 1.2 0 0 1 0 15.400V1.200A1.2 1.2 0 0 1 1.2 0z" fill="#cdcdcd"/><path d="M8.500 2.600L10 6.800 14.200 8.300 10 9.800 8.500 14 7 9.800 2.800 8.300 7 6.800z" fill="#fff"/></svg>
<div class="a" style="left:51.21px;top:32.51px;width:59.29px;height:26.56px;background:#fff;border:1px solid #c6c6c6;border-bottom:none;box-shadow:1.5px 0 2px rgba(0,0,0,0.18)"></div>
<div class="mb" style="left:58.65px">Arquivo</div>
<div class="a" id="menu" style="left:51.21px;top:57.38px;width:322.68px;height:470.26px;background:#fff;border:1px solid #cfcfcf;box-shadow:0 2px 4px rgba(0,0,0,0.17)">
<div class="a" style="left:0;top:-2px;width:57.29px;height:3px;background:#fff"></div>
<div class="mi" style="top:5.6px;background:#eee;">Compartilhar</div>
<div class="sep" style="top:38.6px"></div>
<div class="mi" style="top:45.6px;">Novo<svg class="a" style="right:11.4px;top:10.2px" width="6.6" height="6.6" viewBox="0 0 7 7"><path d="M0.200 0L7 3.500 0.200 7z" fill="#858585"/></svg></div>
<div class="mi" style="top:72.6px;">Abrir...<span class="k"><svg width="12.540" height="12.540" viewBox="-1 -1 14 14" overflow="visible" style="vertical-align:-1.900px;margin-right:0.700px;margin-left:-0.900px;overflow:visible"><path d="M4.450 4.450H7.550V7.550H4.450ZM4.450 4.450V2.600A1.850 1.850 0 1 0 2.600 4.450ZM7.550 4.450H9.400A1.850 1.850 0 1 0 7.550 2.600ZM7.550 7.550V9.400A1.850 1.850 0 1 0 9.400 7.550ZM4.450 7.550H2.600A1.850 1.850 0 1 0 4.450 9.400Z" fill="none" stroke="currentColor" stroke-width="1.350"/></svg>O</span></div>
<div class="mi d" style="top:99.6px;">Renomear...</div>
<div class="mi" style="top:126.6px;">Fazer uma cópia...</div>
<div class="mi" style="top:153.6px;">Adicionar a "Meu Drive"<svg class="a" style="left:5.600px;top:5.800px" width="17.300" height="15.550" viewBox="0 0 24.700 22.200"><path d="M8.300 0h7.400l7.700 13.300h-7.400z M7.400 0.600l3.700 6.400L3.900 19.600 0.200 13.200z M8.600 14.300h7.200v2.400h-2.700v3.400H5.300z M19.300 13.800h2.400v3h3v2.400h-3v3h-2.400v-3h-3v-2.400h3z" fill="#454545"/></svg></div>
<div class="mi d" style="top:180.6px;">Mover para a lixeira<svg class="a" style="left:6.600px;top:5.600px" width="12" height="15.400" viewBox="0 0 12 15.400"><path d="M4 0h4v1.200h4v1.600H0V1.200h4z M0.900 4h10.200v10a1.400 1.400 0 0 1-1.400 1.400H2.300A1.400 1.400 0 0 1 0.900 14z" fill="#d6d6d6"/></svg></div>
<div class="mi d" style="top:207.6px;">Importar...</div>
<div class="sep" style="top:240.6px"></div>
<div class="mi d" style="top:247.6px;">Ver histórico de revisões<span class="k"><svg width="12.540" height="12.540" viewBox="-1 -1 14 14" overflow="visible" style="vertical-align:-1.900px;margin-right:0.700px;margin-left:-0.900px;overflow:visible"><path d="M4.450 4.450H7.550V7.550H4.450ZM4.450 4.450V2.600A1.850 1.850 0 1 0 2.600 4.450ZM7.550 4.450H9.400A1.850 1.850 0 1 0 7.550 2.600ZM7.550 7.550V9.400A1.850 1.850 0 1 0 9.400 7.550ZM4.450 7.550H2.600A1.850 1.850 0 1 0 4.450 9.400Z" fill="none" stroke="currentColor" stroke-width="1.350"/></svg>+Opção+Shift+H</span></div>
<div class="mi d" style="top:274.6px;">Configurações de planilha…</div>
<div class="sep" style="top:307.6px"></div>
<div class="mi" style="top:314.6px;">Fazer download como<svg class="a" style="right:11.4px;top:10.2px" width="6.6" height="6.6" viewBox="0 0 7 7"><path d="M0.200 0L7 3.500 0.200 7z" fill="#858585"/></svg></div>
<div class="mi d" style="top:341.6px;">Publicar na web...</div>
<div class="mi d" style="top:368.6px;">Enviar e-mail a colaboradores...</div>
<div class="mi" style="top:395.6px;">Enviar por e-mail como anexo...</div>
<div class="sep" style="top:428.6px"></div>
<div class="mi" style="top:435.6px;">Imprimir<span class="k"><svg width="12.540" height="12.540" viewBox="-1 -1 14 14" overflow="visible" style="vertical-align:-1.900px;margin-right:0.700px;margin-left:-0.900px;overflow:visible"><path d="M4.450 4.450H7.550V7.550H4.450ZM4.450 4.450V2.600A1.850 1.850 0 1 0 2.600 4.450ZM7.550 4.450H9.400A1.850 1.850 0 1 0 7.550 2.600ZM7.550 7.550V9.400A1.850 1.850 0 1 0 9.400 7.550ZM4.450 7.550H2.600A1.850 1.850 0 1 0 4.450 9.400Z" fill="none" stroke="currentColor" stroke-width="1.350"/></svg>P</span><svg class="a" style="left:6.300px;top:7px" width="14.600" height="13" viewBox="0 0 14.600 13"><path d="M3 0h8.600v2.600H3z M1.600 3.600h11.400a1.600 1.600 0 0 1 1.600 1.600v5H11.600V7.600H3v2.600H0v-5a1.600 1.600 0 0 1 1.600-1.600z M4.200 8.800h6.200V13H4.200z" fill="#474747"/><circle cx="12.300" cy="5.600" r="0.700" fill="#fff"/></svg></div>
</div>
</div></body></html>
